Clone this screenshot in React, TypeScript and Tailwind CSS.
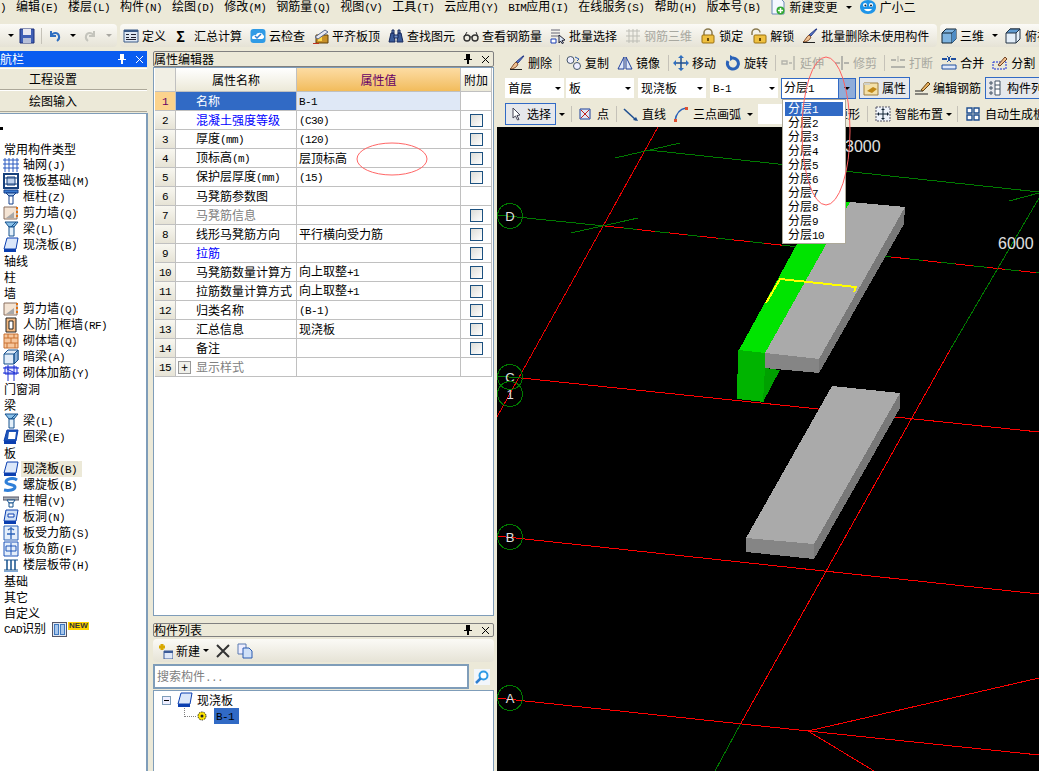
import type { ReactNode } from 'react';

// Latin glyphs sit on a 6px cell and CJK on 12px, like the bitmap font in the screenshot
const T = ({ children, className = '' }: { children: string; className?: string }) => (
  <span className={`whitespace-pre ${className}`}>
    {children.split(/([\x00-\x7f]+)/).map((part, i) =>
      /^[\x00-\x7f]+$/.test(part) ? (
        <span key={i} className="font-['Liberation_Mono'] text-[11px] tracking-[-0.6px]">{part}</span>
      ) : (
        part
      ),
    )}
  </span>
);

const Ico = ({ children, w = 16 }: { children: ReactNode; w?: number }) => (
  <svg width={w} height={16} viewBox={`0 0 ${w} 16`} className="shrink-0">{children}</svg>
);

const Arrow = ({ className = '' }: { className?: string }) => (
  <span className={`w-0 h-0 shrink-0 border-x-[3px] border-x-transparent border-t-[3px] border-t-black ${className}`} />
);

const Sep = ({ className = '' }: { className?: string }) => (
  <span className={`w-px h-[16px] shrink-0 bg-[#c5c2b8] ${className}`} />
);

const Tool = ({ icon, label, className = '', gray = false }: { icon: ReactNode; label: string; className?: string; gray?: boolean }) => (
  <div className={`flex items-center gap-[3px] shrink-0 ${gray ? 'text-[#a8a8a0]' : ''} ${className}`}>
    {icon}
    <T>{label}</T>
  </div>
);

// toolbar icons
const Save = () => <Ico><path d="M1 1h14v14H1z" fill="#3f5fb5" stroke="#1c2f78" /><path d="M4 1h8v6H4z" fill="#e8e8f0" /><path d="M4 10h8v5H4z" fill="#b8c0d8" /></Ico>;
const Undo = ({ c = '#2f6fc0' }: { c?: string }) => <Ico w={13}><path d="M3 3v5h5M3 8c2-4 7-4 8 0 .5 2-.5 4-2 5" fill="none" stroke={c} strokeWidth="2" /></Ico>;
const Redo = () => <Ico w={13}><path d="M10 3v5H5M10 8C8 4 3 4 2 8c-.5 2 .5 4 2 5" fill="none" stroke="#c4c4bc" strokeWidth="2" /></Ico>;
const Define = () => <Ico><path d="M1 2h14v12H1z" fill="#dfe8f4" stroke="#3a5a88" /><path d="M1 2h14v2H1z" fill="#3a5a88" /><path d="M3 6h3v1H3zM3 9h3v1H3zM8 6h5v1H8zM8 9h5v1H8zM3 11h10v1H3z" fill="#223" /></Ico>;
const Cloud = () => <Ico><rect x="0.5" y="1" width="15" height="14" rx="3" fill="#2f9be6" /><path d="M2 10c0-3 3-3 4-3 1-3 6-3 7 0 2 1 1 4-1 4H4c-1 0-2 0-2-1z" fill="#fff" /><path d="M5 8l2 2 4-4" fill="none" stroke="#2f7fd0" strokeWidth="1.5" /></Ico>;
const AlignTop = () => <Ico><path d="M3 7h12v8H3z" fill="#c89028" stroke="#604008" /><path d="M5 9h4v4H5z" fill="#ffd84a" /><path d="M2 9l10-7 3 2-10 7z" fill="#e8e8f0" stroke="#58688c" /><path d="M0 15h6v1H0z" fill="#c03020" /></Ico>;
const Binoculars = () => <Ico><path d="M1 14l2-9h3l1 9zM9 14l1-9h3l2 9z" fill="#3a5a98" stroke="#16285c" /><path d="M4 2h2v3H4zM10 2h2v3h-2zM6 7h4v3H6z" fill="#7090c8" stroke="#16285c" /></Ico>;
const Glasses = () => <Ico><circle cx="4" cy="10" r="3" fill="none" stroke="#333" strokeWidth="1.4" /><circle cx="12" cy="10" r="3" fill="none" stroke="#333" strokeWidth="1.4" /><path d="M7 9h2M1 9l3-5M15 9l-2-5" stroke="#333" fill="none" /></Ico>;
const BatchSelect = () => <Ico><path d="M1 2h9M1 5h9M1 8h9" stroke="#667" /><path d="M1 11h5v4H1z" fill="#fff" stroke="#1b3fb5" /><path d="M9 7l6 5-3 .5 1.5 2.5-1.5.5-1.5-2.5-1.5 2z" fill="#dce8f8" stroke="#223" /></Ico>;
const Rebar3d = () => <Ico><path d="M1 3h14M1 8h14M1 13h14M4 1v14M8 1v14M12 1v14" stroke="#bdbdb5" fill="none" /></Ico>;
const Lock = () => <Ico><path d="M4 7V4.5a4 3.5 0 018 0V7" fill="none" stroke="#8a7a50" strokeWidth="1.5" /><rect x="2" y="7" width="12" height="8" rx="1" fill="#efc040" stroke="#9a7010" /><path d="M7 10h2v3H7z" fill="#6a4a08" /></Ico>;
const Unlock = () => <Ico><path d="M1 7V4.5a4 3.5 0 018 0" fill="none" stroke="#8a7a50" strokeWidth="1.5" /><rect x="3" y="7" width="12" height="8" rx="1" fill="#efc040" stroke="#9a7010" /><path d="M8 10h2v3H8z" fill="#6a4a08" /></Ico>;
const Brush = () => <Ico><path d="M9 8l6-7-1 0-7 6z" fill="#5a7ad0" stroke="#283c88" /><path d="M7 7l2 2c-1 3-4 5-8 5 2-1 3-5 6-7z" fill="#f0c090" stroke="#805030" /><path d="M1 14h12v1H1z" fill="#222" /></Ico>;
const Box3d = () => <Ico><path d="M1 5l4-4h10v10l-4 4H1z" fill="#7fb4e0" stroke="#123" /><path d="M1 5h10v10M11 5l4-4" fill="none" stroke="#123" /><path d="M11 5l4-4v10l-4 4z" fill="#4f8cc4" /></Ico>;
const TopView = () => <Ico><path d="M1 5l4-4h10v10l-4 4H1z" fill="#e4eef8" stroke="#234" /><path d="M1 5l4-4h10l-4 4z" fill="#5f9ad0" stroke="#234" /><path d="M11 5v10" stroke="#234" /></Ico>;
const CopyIco = () => <Ico><circle cx="4.5" cy="5" r="3.5" fill="#eef" stroke="#456" /><circle cx="11" cy="11" r="3.5" fill="#eef" stroke="#456" /><path d="M9 2l4 2-2 2" fill="none" stroke="#2a5ab0" /></Ico>;
const Mirror = () => <Ico><path d="M7 2v12H1zM9 2v12h6z" fill="#dfe8f8" stroke="#1f3f9a" /></Ico>;
const Move = () => <Ico><path d="M8 1v14M1 8h14" stroke="#1f4f90" strokeWidth="1.5" /><path d="M8 0l3 3H5zM8 16l3-3H5zM0 8l3-3v6zM16 8l-3-3v6z" fill="#2f6fc0" /></Ico>;
const Rotate = () => <Ico><path d="M8 3a5.5 5.5 0 11-5 3" fill="none" stroke="#2a62b8" strokeWidth="3" /><path d="M5 0l5 3-5 3z" fill="#2a62b8" /></Ico>;
const Extend = () => <Ico><path d="M1 6h5v3H1zM8 8h3M13 1v14" fill="none" stroke="#b4b4ac" strokeWidth="1.4" /></Ico>;
const Trim = () => <Ico><path d="M1 8h5M10 8h5" stroke="#b4b4ac" strokeWidth="2" /><path d="M8 1v14" stroke="#b4b4ac" strokeWidth="2" /></Ico>;
const Break = () => <Ico><path d="M1 5h5M10 5h5M1 12h14" stroke="#b4b4ac" strokeWidth="2" /><path d="M8 1v6" stroke="#b4b4ac" /></Ico>;
const Merge = () => <Ico><path d="M1 4h5M10 4h5" stroke="#1f4fa0" strokeWidth="2" /><path d="M6 1l3 3-3 3M10 1L7 4l3 3" fill="none" stroke="#1f4fa0" /><path d="M1 10h14v4H1z" fill="#dfe8f8" stroke="#1f4fa0" /></Ico>;
const Split = () => <Ico><path d="M1 7h13v7H1z" fill="none" stroke="#1b2fd5" strokeDasharray="2 1" /><path d="M6 10l7-8 2 2-7 7z" fill="#f0c090" stroke="#704020" /></Ico>;
const PropIco = () => <Ico><path d="M1 3h14v12H1z" fill="#f4e0a8" stroke="#a08040" /><path d="M1 3h6v2H1z" fill="#d0d0c8" /><path d="M4 11l6-4 4 2-5 4z" fill="#c08818" /></Ico>;
const EditRebar = () => <Ico><path d="M1 11h8M1 14h13" stroke="#222" /><path d="M7 10l7-8 2 2-7 7z" fill="#e8b060" stroke="#604010" /></Ico>;
const ListIco = () => <Ico w={12}><path d="M1 2h2v2H1zM1 7h2v2H1zM1 12h2v2H1z" fill="none" stroke="#456" /><path d="M6 1h5v14H6zM6 5h5M6 9h5" fill="#fff" stroke="#456" /></Ico>;
const Cursor = () => <Ico w={12}><path d="M3 2l7 7-3 .5 2 4-1.5.5-2-4-2.5 2z" fill="#fff" stroke="#445" /></Ico>;
const PointIco = () => <Ico w={12}><path d="M1 3h10v10H1z" fill="#dfe6f4" stroke="#1c3f9a" /><path d="M2 4l8 8M10 4l-8 8" stroke="#c02020" /></Ico>;
const LineIco = () => <Ico><path d="M1 3l12 11" stroke="#1f4f90" strokeWidth="1.6" /><path d="M15 15l-5-1 3-3z" fill="#1f4f90" /></Ico>;
const ArcIco = () => <Ico><path d="M2 15C3 8 7 3 13 2" fill="none" stroke="#2a62b8" strokeWidth="1.5" /><path d="M1 13h3v3H1zM12 1h3v3h-3z" fill="#e05030" /></Ico>;
const Smart = () => <Ico><path d="M1 1h14v14H1z" fill="#eef3fa" stroke="#556" strokeDasharray="2 1" /><path d="M8 3v10M3 8h10" stroke="#123" /><path d="M8 2l2 2H6zM8 14l2-2H6zM2 8l2-2v4zM14 8l-2-2v4z" fill="#123" /></Ico>;
const Auto = () => <Ico><path d="M2 2h5v5H2zM9 2h5v5H9zM2 9h5v5H2zM9 9h5v5H9z" fill="#fff" stroke="#1f4f90" strokeWidth="1.4" /></Ico>;
const NewDoc = () => <Ico><path d="M2 0h9l3 3v12H2z" fill="#f4f8ff" stroke="#6a8ab8" /><circle cx="10.5" cy="11.5" r="4" fill="#34a834" /><path d="M10.5 9v5M8 11.5h5" stroke="#fff" strokeWidth="1.5" /></Ico>;
const Mascot = () => <Ico w={18}><path d="M9 1c5 0 8 3 8 7s-3 7-8 7-8-3-8-7 3-7 8-7z" fill="#1f95e8" /><circle cx="6" cy="6" r="2" fill="#fff" /><circle cx="12" cy="6" r="2" fill="#fff" /><circle cx="6.4" cy="6.4" r="1" fill="#123" /><circle cx="12" cy="6.4" r="1" fill="#123" /><path d="M5 10c2 3 6 3 8 0z" fill="#fff" /></Ico>;

// tree icons
const Grid = () => <Ico><path d="M2 1v14M6 1v14M10 1v14M14 1v14M0 3h16M0 7h16M0 11h16" stroke="#2a5ac0" /></Ico>;
const Raft = () => <Ico><path d="M1 1h14v14H1z" fill="#fff" stroke="#16407c" strokeWidth="2" /><path d="M4 4h8v8H4z" fill="#bcd0ec" stroke="#16407c" /><path d="M1 5h14M1 11h14" stroke="#16407c" /></Ico>;
const Column = () => <Ico><path d="M1 1h14v3H1z" fill="#3a7ad0" stroke="#14408c" /><path d="M3 4h10l-3 3H6z" fill="#a8c8ec" stroke="#14408c" /><path d="M6 7h4v8H6z" fill="#fff" stroke="#14408c" /></Ico>;
const Wall = () => <Ico><path d="M1 2h13v12H1z" fill="#f4e4d4" stroke="#8a7060" /><path d="M3 13l8-6v6z" fill="#a8a8a8" /><path d="M14 2v12" stroke="#e07010" strokeWidth="2" strokeDasharray="2 2" /></Ico>;
const Beam = () => <Ico><path d="M2 1h13l-4 5H6z" fill="#8ac0e8" stroke="#14508c" /><path d="M6 6h5v9H6z" fill="#e4f0fa" stroke="#14508c" /><path d="M8 6l5-5" stroke="#14508c" /></Ico>;
const Slab = () => <Ico><path d="M4 1h11l-2 11H1z" fill="#dbe7fa" stroke="#0b3fb0" /><path d="M1 12h12v3H1z" fill="#0b3fb0" /></Ico>;
const DoorWall = () => <Ico><path d="M3 1h10v14H3z" fill="#f2b880" stroke="#222" /><path d="M6 4h4v8H6z" fill="#fff" stroke="#222" /></Ico>;
const Brick = () => <Ico><path d="M1 1h14v14H1z" fill="#f6c69c" stroke="#c87030" /><path d="M1 5h14M1 10h14M5 1v4M11 1v4M8 5v5M4 10v5M12 10v5" stroke="#c87030" /></Ico>;
const DarkBeam = () => <Ico><path d="M1 5l4-4h10v10l-4 4H1z" fill="#e0ecf8" stroke="#14508c" /><path d="M11 5l4-4v10l-4 4z" fill="#8ab0d8" stroke="#14508c" /><path d="M1 5h10v10" fill="none" stroke="#14508c" /></Ico>;
const WallRebar = () => <Ico><path d="M2 2h12v7H2z" fill="#eef" stroke="#1b2fd5" /><path d="M0 3h16M0 8h16M5 0v16M11 0v16M4 4l8 4" stroke="#1b2fd5" /></Ico>;
const RingBeam = () => <Ico><path d="M4 1h11l-2 11H1z" fill="#1f55b8" stroke="#0b3fb0" /><path d="M6 3h7l-1 7H5z" fill="#fff" /><path d="M1 12h12v3H1z" fill="#0b3fb0" /></Ico>;
const Spiral = () => <Ico><path d="M14 3C10 0 3 2 3 5s9 2 9 5-6 4-11 3" fill="none" stroke="#2f7fd8" strokeWidth="3" /></Ico>;
const Cap = () => <Ico><path d="M0 4h16v3H0z" fill="#a8b0b8" stroke="#556" /><path d="M4 7h8l-2 3H6z" fill="#fff" stroke="#14508c" /><path d="M6 10h4v4H6z" fill="#fff" stroke="#14508c" /></Ico>;
const SlabHole = () => <Ico><path d="M3 1h12l-2 11H1z" fill="#cfe0f6" stroke="#0b3fb0" /><path d="M5 5h6v3H5z" fill="#fff" stroke="#0b3fb0" /><path d="M1 12h12v3H1z" fill="#0b3fb0" /></Ico>;
const SlabForce = () => <Ico><path d="M1 1h14v14H1z" fill="#e4eefa" stroke="#2a62b8" /><path d="M8 2v12M4 9h8M5 5a4 4 0 016 0" fill="none" stroke="#2a62b8" strokeWidth="1.3" /></Ico>;
const SlabNeg = () => <Ico><path d="M1 1h14v14H1z" fill="#e4eefa" stroke="#1f55b8" /><path d="M8 2v12M3 5h10v5M3 5v5M3 10h10" fill="none" stroke="#1f55b8" /></Ico>;
const Band = () => <Ico><path d="M1 3h14M1 13h14" stroke="#14508c" /><path d="M4 3v10M8 3v10M12 3v10" stroke="#14508c" strokeWidth="1.5" /><path d="M1 14h14v1H1z" fill="#7fa8d8" /></Ico>;

const TREE: [string, ReactNode?, boolean?][] = [
  ['常用构件类型'],
  ['轴网(J)', <Grid />],
  ['筏板基础(M)', <Raft />],
  ['框柱(Z)', <Column />],
  ['剪力墙(Q)', <Wall />],
  ['梁(L)', <Beam />],
  ['现浇板(B)', <Slab />],
  ['轴线'],
  ['柱'],
  ['墙'],
  ['剪力墙(Q)', <Wall />],
  ['人防门框墙(RF)', <DoorWall />],
  ['砌体墙(Q)', <Brick />],
  ['暗梁(A)', <DarkBeam />],
  ['砌体加筋(Y)', <WallRebar />],
  ['门窗洞'],
  ['梁'],
  ['梁(L)', <Beam />],
  ['圈梁(E)', <RingBeam />],
  ['板'],
  ['现浇板(B)', <Slab />, true],
  ['螺旋板(B)', <Spiral />],
  ['柱帽(V)', <Cap />],
  ['板洞(N)', <SlabHole />],
  ['板受力筋(S)', <SlabForce />],
  ['板负筋(F)', <SlabNeg />],
  ['楼层板带(H)', <Band />],
  ['基础'],
  ['其它'],
  ['自定义'],
];

const PROPS: { name: string; value?: string; check?: boolean; tone?: string }[] = [
  { name: '名称', value: 'B-1' },
  { name: '混凝土强度等级', value: '(C30)', check: true, tone: 'text-[#0000ff]' },
  { name: '厚度(mm)', value: '(120)', check: true },
  { name: '顶标高(m)', value: '层顶标高', check: true },
  { name: '保护层厚度(mm)', value: '(15)', check: true },
  { name: '马凳筋参数图' },
  { name: '马凳筋信息', check: true, tone: 'text-[#808080]' },
  { name: '线形马凳筋方向', value: '平行横向受力筋', check: true },
  { name: '拉筋', check: true, tone: 'text-[#0000ff]' },
  { name: '马凳筋数量计算方', value: '向上取整+1', check: true },
  { name: '拉筋数量计算方式', value: '向上取整+1', check: true },
  { name: '归类名称', value: '(B-1)', check: true },
  { name: '汇总信息', value: '现浇板', check: true },
  { name: '备注', check: true },
  { name: '显示样式', tone: 'text-[#808080]' },
];

const MENU = ['编辑(E)', '楼层(L)', '构件(N)', '绘图(D)', '修改(M)', '钢筋量(Q)', '视图(V)', '工具(T)', '云应用(Y)', 'BIM应用(I)', '在线服务(S)', '帮助(H)', '版本号(B)'];
const FLOORS = ['分层1', '分层2', '分层3', '分层4', '分层5', '分层6', '分层7', '分层8', '分层9', '分层10'];

const PinClose = ({ light = false }: { light?: boolean }) => (
  <div className={`ml-auto flex items-center gap-[9px] pr-[3px] ${light ? 'text-white' : 'text-black'}`}>
    <svg width="8" height="10" viewBox="0 0 8 10"><path d="M2 0h4v5h2v1H5v4H3V6H0V5h2z" fill="currentColor" /></svg>
    <svg width="9" height="9" viewBox="0 0 9 9"><path d="M1 1l7 7M8 1L1 8" stroke="currentColor" fill="none" /></svg>
  </div>
);

const Combo = ({ label, className }: { label: string; className: string }) => (
  <div className={`h-[20px] bg-white flex items-center pl-[3px] shrink-0 ${className}`}>
    <T>{label}</T>
    <Arrow className="ml-auto mr-[3px]" />
  </div>
);

const Check = () => <span className="w-[13px] h-[13px] border border-[#1c5180] bg-gradient-to-br from-[#dcdcd7] to-white" />;

const LINES: [string, string, string][] = [
  ['#e80000', '658,127 497,417', ''],
  ['#007a00', '615,158 680,143', ''],
  ['#007a00', '648,150 1039,192', ''],
  ['#007a00', '1009,201 1039,193', ''],
  ['#007a00', '497,215 605,226', ''],
  ['#007a00', '571,233 638,218', ''],
  ['#007a00', '605,226 1039,273', ''],
  ['#ff0000', '605,226 1039,273', '18 14'],
  ['#007a00', '1039,198 950,350', ''],
  ['#ff0000', '950,350 741,723', ''],
  ['#007a00', '741,723 715,771', ''],
  ['#007a00', '497,376 521,378', ''],
  ['#ff0000', '521,378 1039,432', ''],
  ['#ff0000', '497,536 1039,594', ''],
  ['#ff0000', '497,698 808,731', ''],
  ['#ff0000', '808,731 1039,755', ''],
  ['#ff0000', '808,731 1039,678', ''],
  ['#ff0000', '808,731 874,771', ''],
];

const AXES: [string, number, number][] = [['D', 510, 216], ['C', 510, 377], ['1', 510, 394], ['B', 510, 537], ['A', 510, 698]];

const Canvas = () => (
  <svg viewBox="497 127 542 644" className="w-full h-full bg-black block" shapeRendering="crispEdges">
    {LINES.map(([c, p, dash], i) => (
      <polyline key={i} points={p} stroke={c} strokeDasharray={dash || undefined} fill="none" />
    ))}
    {AXES.map(([t, x, y]) => (
      <g key={t}>
        <circle cx={x} cy={y} r="12.5" fill="none" stroke="#007a00" />
        <text x={x} y={y + 5} textAnchor="middle" fontSize="13" fontFamily="Liberation Sans" fill="#e0e0e0">{t}</text>
      </g>
    ))}
    <text x="845" y="152" fontSize="16" fontFamily="Liberation Sans" fill="#e0e0e0">3000</text>
    <text x="998" y="249" fontSize="16" fontFamily="Liberation Sans" fill="#e0e0e0">6000</text>

    <polygon points="821,200 850,202 765,353 739,350" fill="#00e400" />
    <polygon points="738,350 765,353 764,402 737,399" fill="#00b400" />
    <polygon points="765,368 780,370 763,402" fill="#00a000" />
    <polygon points="850,202 905,207 819,359 765,353" fill="#aaaaaa" />
    <polygon points="905,207 904,224 819,373 819,359" fill="#787878" />
    <polygon points="765,353 819,359 819,373 765,368" fill="#858585" />
    <polyline points="766,303 780,279 856,287 854,292" fill="none" stroke="#ffff00" strokeWidth="2" />

    <polygon points="832,386 900,393 814,544 746,538" fill="#aaaaaa" />
    <polygon points="900,393 900,408 814,559 814,544" fill="#787878" />
    <polygon points="746,538 814,544 814,559 746,552" fill="#858585" />
  </svg>
);

export default function App() {
  return (
    <div className="relative w-[1039px] h-[771px] overflow-hidden bg-[#ece9d8] text-black text-[12px] leading-[14px] font-['Noto_Sans_CJK_SC',sans-serif] flex flex-col">
      {/* menu bar */}
      <div className="h-[24px] pb-[10px] flex items-center gap-[10px] shrink-0">
        <T>)</T>
        {MENU.map((m) => <T key={m}>{m}</T>)}
        <div className="flex items-center gap-[3px]">
          <NewDoc />
          <T>新建变更</T>
          <Arrow className="ml-[6px]" />
        </div>
        <div className="-ml-[3px] flex items-center gap-[2px]">
          <Mascot />
          <T>广小二</T>
        </div>
      </div>

      {/* main toolbar */}
      <div className="h-[26px] pb-[3px] flex gap-[3px] shrink-0">
        <div className="w-[117px] flex items-center rounded-r bg-gradient-to-b from-[#fbfaf6] to-[#e6e3d6]">
          <Arrow className="ml-[8px]" />
          <span className="ml-[5px]"><Save /></span>
          <Sep className="ml-[6px]" />
          <span className="ml-[6px]"><Undo /></span>
          <Arrow className="ml-[9px]" />
          <span className="ml-[8px]"><Redo /></span>
          <Arrow className="ml-[9px] opacity-30" />
        </div>
        <div className="w-[817px] pl-[3px] flex items-center gap-[8px] rounded bg-gradient-to-b from-[#fbfaf6] to-[#e6e3d6]">
          <Tool icon={<Define />} label="定义" />
          <div className="flex items-center gap-[7px]"><span className="w-[13px] text-center font-bold text-[14px]">Σ</span><T>汇总计算</T></div>
          <Tool icon={<Cloud />} label="云检查" />
          <Tool icon={<AlignTop />} label="平齐板顶" />
          <Tool icon={<Binoculars />} label="查找图元" />
          <Tool icon={<Glasses />} label="查看钢筋量" />
          <Tool icon={<BatchSelect />} label="批量选择" />
          <Tool icon={<Rebar3d />} label="钢筋三维" gray />
          <Tool icon={<Lock />} label="锁定" />
          <Tool icon={<Unlock />} label="解锁" />
          <Tool icon={<Brush />} label="批量删除未使用构件" />
        </div>
        <div className="flex-1 pl-px flex items-center rounded-l bg-gradient-to-b from-[#fbfaf6] to-[#e6e3d6] overflow-hidden">
          <Tool icon={<Box3d />} label="三维" />
          <Arrow className="ml-[8px]" />
          <span className="ml-[7px] flex items-center gap-[4px] shrink-0"><TopView /><T>俯视</T></span>
        </div>
      </div>

      <div className="flex-1 flex min-h-0">
        {/* navigation column */}
        <div className="w-[153px] shrink-0 flex flex-col pt-px">
          <div className="w-[147px] h-[16px] bg-[#0a5cf0] text-white flex items-center">
            <T>航栏</T>
            <PinClose light />
          </div>
          <div className="w-[147px] h-[22px] mt-px flex items-center pl-[29px] bg-[#ece9d8] border-t border-t-white border-b border-b-[#aca899]"><T>工程设置</T></div>
          <div className="w-[147px] h-[22px] flex items-center pl-[29px] bg-[#ece9d8] border-t border-t-white border-b border-b-[#aca899]"><T>绘图输入</T></div>
          <div className="relative w-[148px] flex-1 mt-px bg-white border-t border-t-[#7f9db9] border-r-2 border-r-[#7f9db9] pt-[27px]">
            <span className="absolute left-0 top-[13px] w-[3px] h-[3px] bg-black" />
            {TREE.map(([label, icon, active], i) => (
              <div key={i} className="h-[16px] flex items-center">
                {icon ? (
                  <>
                    <span className="ml-[3px]">{icon}</span>
                    <span className={`ml-[2px] pl-[2px] h-[16px] flex items-center ${active ? 'w-[61px] bg-[#ece9d8]' : ''}`}><T>{label}</T></span>
                  </>
                ) : (
                  <span className="pl-[4px]"><T>{label}</T></span>
                )}
              </div>
            ))}
            <div className="h-[16px] flex items-center pl-[4px]">
              <T>CAD识别</T>
              <span className="ml-[6px] w-[15px] h-[15px] border border-[#556] bg-[#dfe8f4] flex justify-center gap-px p-px">
                <span className="w-[5px] bg-[#a8c6ea] border border-[#3f78c0]" />
                <span className="w-[5px] bg-[#a8c6ea] border border-[#3f78c0]" />
              </span>
              <span className="ml-px -mt-[7px] h-[8px] px-px bg-[#ffd400] font-['Liberation_Sans'] font-bold text-[8px] leading-[8px] text-[#333]">NEW</span>
            </div>
          </div>
        </div>

        {/* property editor and component list */}
        <div className="w-[344px] shrink-0 flex flex-col pt-px">
          <div className="w-[341px] h-[16px] flex items-center border border-[#808080] rounded-[2px]">
            <T>属性编辑器</T>
            <PinClose />
          </div>
          <div className="w-[341px] h-[549px] bg-white border border-[#7f9db9] pl-px">
            <div className="flex h-[24px]">
              <div className="w-[21px] border-r border-b border-[#c0c0c0] bg-[#f1efe4]" />
              <div className="w-[121px] flex items-center justify-center border-r border-b border-[#c0c0c0] bg-gradient-to-b from-white to-[#ece9d8]"><T>属性名称</T></div>
              <div className="w-[164px] flex items-center justify-center border-r border-b border-[#c0c0c0] bg-gradient-to-b from-[#fcdca3] to-[#f2bc5b] text-[#660066]"><T>属性值</T></div>
              <div className="w-[31px] flex items-center justify-center border-r border-b border-[#c0c0c0] bg-gradient-to-b from-white to-[#ece9d8]"><T>附加</T></div>
            </div>
            {PROPS.map((p, i) => (
              <div key={p.name} className="flex h-[19px]">
                <div className={`w-[21px] flex items-center justify-center border-r border-b border-[#c0c0c0] ${i === 0 ? 'bg-[#fbd38d] text-[#660066]' : 'bg-gradient-to-b from-[#f8f7f0] to-[#e6e3d6]'}`}><T>{String(i + 1)}</T></div>
                <div className={`w-[121px] flex items-center border-r border-b border-[#c0c0c0] pl-[20px] ${i === 0 ? 'bg-[#316ac5] text-white' : p.tone ?? ''}`}>
                  {i === 14 && <span className="-ml-[18px] mr-[5px] w-[13px] h-[13px] border border-[#999] bg-[#f0f0ea] flex items-center justify-center text-[12px] leading-none text-black">+</span>}
                  <T>{p.name}</T>
                </div>
                <div className={`w-[164px] flex items-center border-r border-b border-[#c0c0c0] pl-[2px] ${i === 0 ? 'bg-[#dfe8f6]' : ''}`}>
                  {p.value && <T>{p.value}</T>}
                </div>
                <div className="w-[31px] flex items-center justify-center border-r border-b border-[#c0c0c0]">
                  {p.check && <Check />}
                </div>
              </div>
            ))}
          </div>

          <div className="w-[341px] h-[14px] mt-[7px] flex items-center border border-[#808080] rounded-[2px]">
            <T>构件列表</T>
            <PinClose />
          </div>
          <div className="w-[341px] h-[23px] mt-[2px] flex items-center pl-[4px] rounded bg-gradient-to-b from-[#fbfaf6] to-[#e6e3d6]">
            <Ico><path d="M5 1v6M2 4h6" stroke="#d8a800" strokeWidth="3" /><path d="M7 8h9v8H7z" fill="#dfe8f8" stroke="#3a5a98" /><path d="M7 8h9v2H7z" fill="#3a5a98" /></Ico>
            <span className="ml-[3px]"><T>新建</T></span>
            <Arrow className="ml-[3px]" />
            <span className="ml-[6px]"><Ico><path d="M2 2l12 12M14 2L2 14" stroke="#333" strokeWidth="2" /></Ico></span>
            <span className="ml-[6px]"><Ico><path d="M1 1h8v10H1z" fill="#eef" stroke="#5a7ab0" /><path d="M6 5h6l3 3v7H6z" fill="#cfe0f8" stroke="#2a5ab0" /></Ico></span>
          </div>
          <div className="w-[341px] h-[25px] mt-[2px] flex">
            <div className="w-[316px] border-2 border-[#7f9db9] bg-white flex items-center pl-[2px] text-[#808080]"><T>搜索构件...</T></div>
            <div className="flex-1 flex items-center justify-center">
              <svg width="16" height="16" viewBox="0 0 16 16"><rect width="16" height="16" fill="#f2f6fb" /><circle cx="9.5" cy="6.5" r="4" fill="#fff" stroke="#2f9be6" strokeWidth="2" /><path d="M6.5 9.5L2 14" stroke="#2f7fd0" strokeWidth="2.5" /></svg>
            </div>
          </div>
          <div className="w-[341px] flex-1 mt-px bg-white border-t border-x border-[#7f9db9] pt-px">
            <div className="h-[16px] flex items-center pl-[8px]">
              <span className="w-[9px] h-[9px] border border-[#7f9db9] bg-[#eef] flex items-center justify-center"><span className="w-[5px] h-px bg-black" /></span>
              <span className="ml-[6px]"><Slab /></span>
              <span className="ml-[4px]"><T>现浇板</T></span>
            </div>
            <div className="h-[16px] flex items-center pl-[30px]">
              <span className="w-[12px] h-[9px] -mt-[7px] border-l border-b border-dotted border-[#808080]" />
              <svg className="ml-px" width="10" height="10" viewBox="0 0 10 10"><circle cx="5" cy="5" r="4" fill="#ffe600" stroke="#222" strokeDasharray="1.5 1" /><circle cx="5" cy="5" r="1.5" fill="#222" /></svg>
              <span className="ml-[7px] w-[25px] h-[16px] pl-[2px] bg-[#316ac5] flex items-center"><T>B-1</T></span>
            </div>
          </div>
        </div>

        {/* drawing area with its toolbars */}
        <div className="flex-1 flex flex-col min-w-0">
          <div className="h-[25px] pl-[12px] flex items-center shrink-0 overflow-hidden">
            <Tool icon={<Brush />} label="删除" />
            <Sep className="ml-[7px]" />
            <Tool icon={<CopyIco />} label="复制" className="ml-[6px]" />
            <Tool icon={<Mirror />} label="镜像" className="ml-[8px]" />
            <Sep className="ml-[8px]" />
            <Tool icon={<Move />} label="移动" className="ml-[4px]" />
            <Tool icon={<Rotate />} label="旋转" className="ml-[9px]" />
            <Sep className="ml-[7px]" />
            <Tool icon={<Extend />} label="延伸" className="ml-[5px]" gray />
            <Tool icon={<Trim />} label="修剪" className="ml-[10px]" gray />
            <Sep className="ml-[7px]" />
            <Tool icon={<Break />} label="打断" className="ml-[5px]" gray />
            <Tool icon={<Merge />} label="合并" className="ml-[8px]" />
            <Tool icon={<Split />} label="分割" className="ml-[8px]" />
          </div>

          <div className="relative z-10 h-[26px] pl-[8px] flex items-center shrink-0">
            <Combo label="首层" className="w-[59px]" />
            <Combo label="板" className="w-[68px] ml-[2px]" />
            <Combo label="现浇板" className="w-[68px] ml-[4px]" />
            <Combo label="B-1" className="w-[68px] ml-[4px]" />
            <div className="relative ml-[3px] w-[75px] h-[21px] shrink-0 flex border border-[#316ac5] bg-white">
              <span className="flex-1 pl-[2px] flex items-center"><T>分层1</T></span>
              <span className="w-[17px] bg-[#8fadd9] border-l border-[#316ac5] flex items-center justify-center"><Arrow /></span>
              <div className="absolute left-0 top-[20px] w-[64px] h-[145px] p-[2px] bg-white border border-[#aca899] z-20">
                {FLOORS.map((f, i) => (
                  <div key={f} className={`h-[14px] pl-[3px] flex items-center ${i === 0 ? 'bg-[#316ac5] text-white' : ''}`}><T>{f}</T></div>
                ))}
              </div>
            </div>
            <div className="ml-[3px] w-[51px] h-[22px] shrink-0 flex items-center justify-center gap-[3px] border border-[#316ac5] bg-[#e6e8ec]"><PropIco /><T>属性</T></div>
            <Tool icon={<EditRebar />} label="编辑钢筋" className="ml-[4px]" />
            <div className="ml-[4px] flex-1 min-w-0 overflow-hidden h-[22px] flex items-center gap-[6px] pl-[3px] border-y border-l border-[#316ac5] bg-[#e6e8ec]"><ListIco /><T>构件列表</T></div>
          </div>

          <div className="h-[26px] pl-[8px] flex items-center shrink-0 overflow-hidden">
            <div className="w-[51px] h-[22px] shrink-0 flex items-center justify-center gap-[5px] border border-[#316ac5] bg-[#e6e8ec]"><Cursor /><T>选择</T></div>
            <Arrow className="ml-[3px]" />
            <Sep className="ml-[6px]" />
            <Tool icon={<PointIco />} label="点" className="ml-[7px] gap-[6px]" />
            <Sep className="ml-[7px]" />
            <Tool icon={<LineIco />} label="直线" className="ml-[6px] gap-[2px]" />
            <Tool icon={<ArcIco />} label="三点画弧" className="ml-[7px] gap-[4px]" />
            <Arrow className="ml-[6px]" />
            <div className="ml-[5px] w-[60px] h-[20px] shrink-0 bg-white" />
            <span className="ml-[18px] shrink-0"><T>矩形</T></span>
            <Sep className="ml-[7px]" />
            <Tool icon={<Smart />} label="智能布置" className="ml-[7px] gap-[4px]" />
            <Arrow className="ml-[3px]" />
            <Sep className="ml-[5px]" />
            <Tool icon={<Auto />} label="自动生成板" className="ml-[7px] gap-[4px]" />
          </div>

          <div className="flex-1 min-h-0"><Canvas /></div>
        </div>
      </div>

      {/* hand-drawn red marks over the screenshot */}
      <svg className="absolute left-[350px] top-[135px] z-30" width="84" height="48" viewBox="0 0 84 48">
        <ellipse cx="42" cy="24" rx="35" ry="16" fill="none" stroke="#ff6666" />
      </svg>
      <svg className="absolute left-[795px] top-[50px] z-30" width="64" height="162" viewBox="0 0 64 162">
        <ellipse cx="31" cy="81" rx="24" ry="74" fill="none" stroke="#ff6060" />
      </svg>
    </div>
  );
}
